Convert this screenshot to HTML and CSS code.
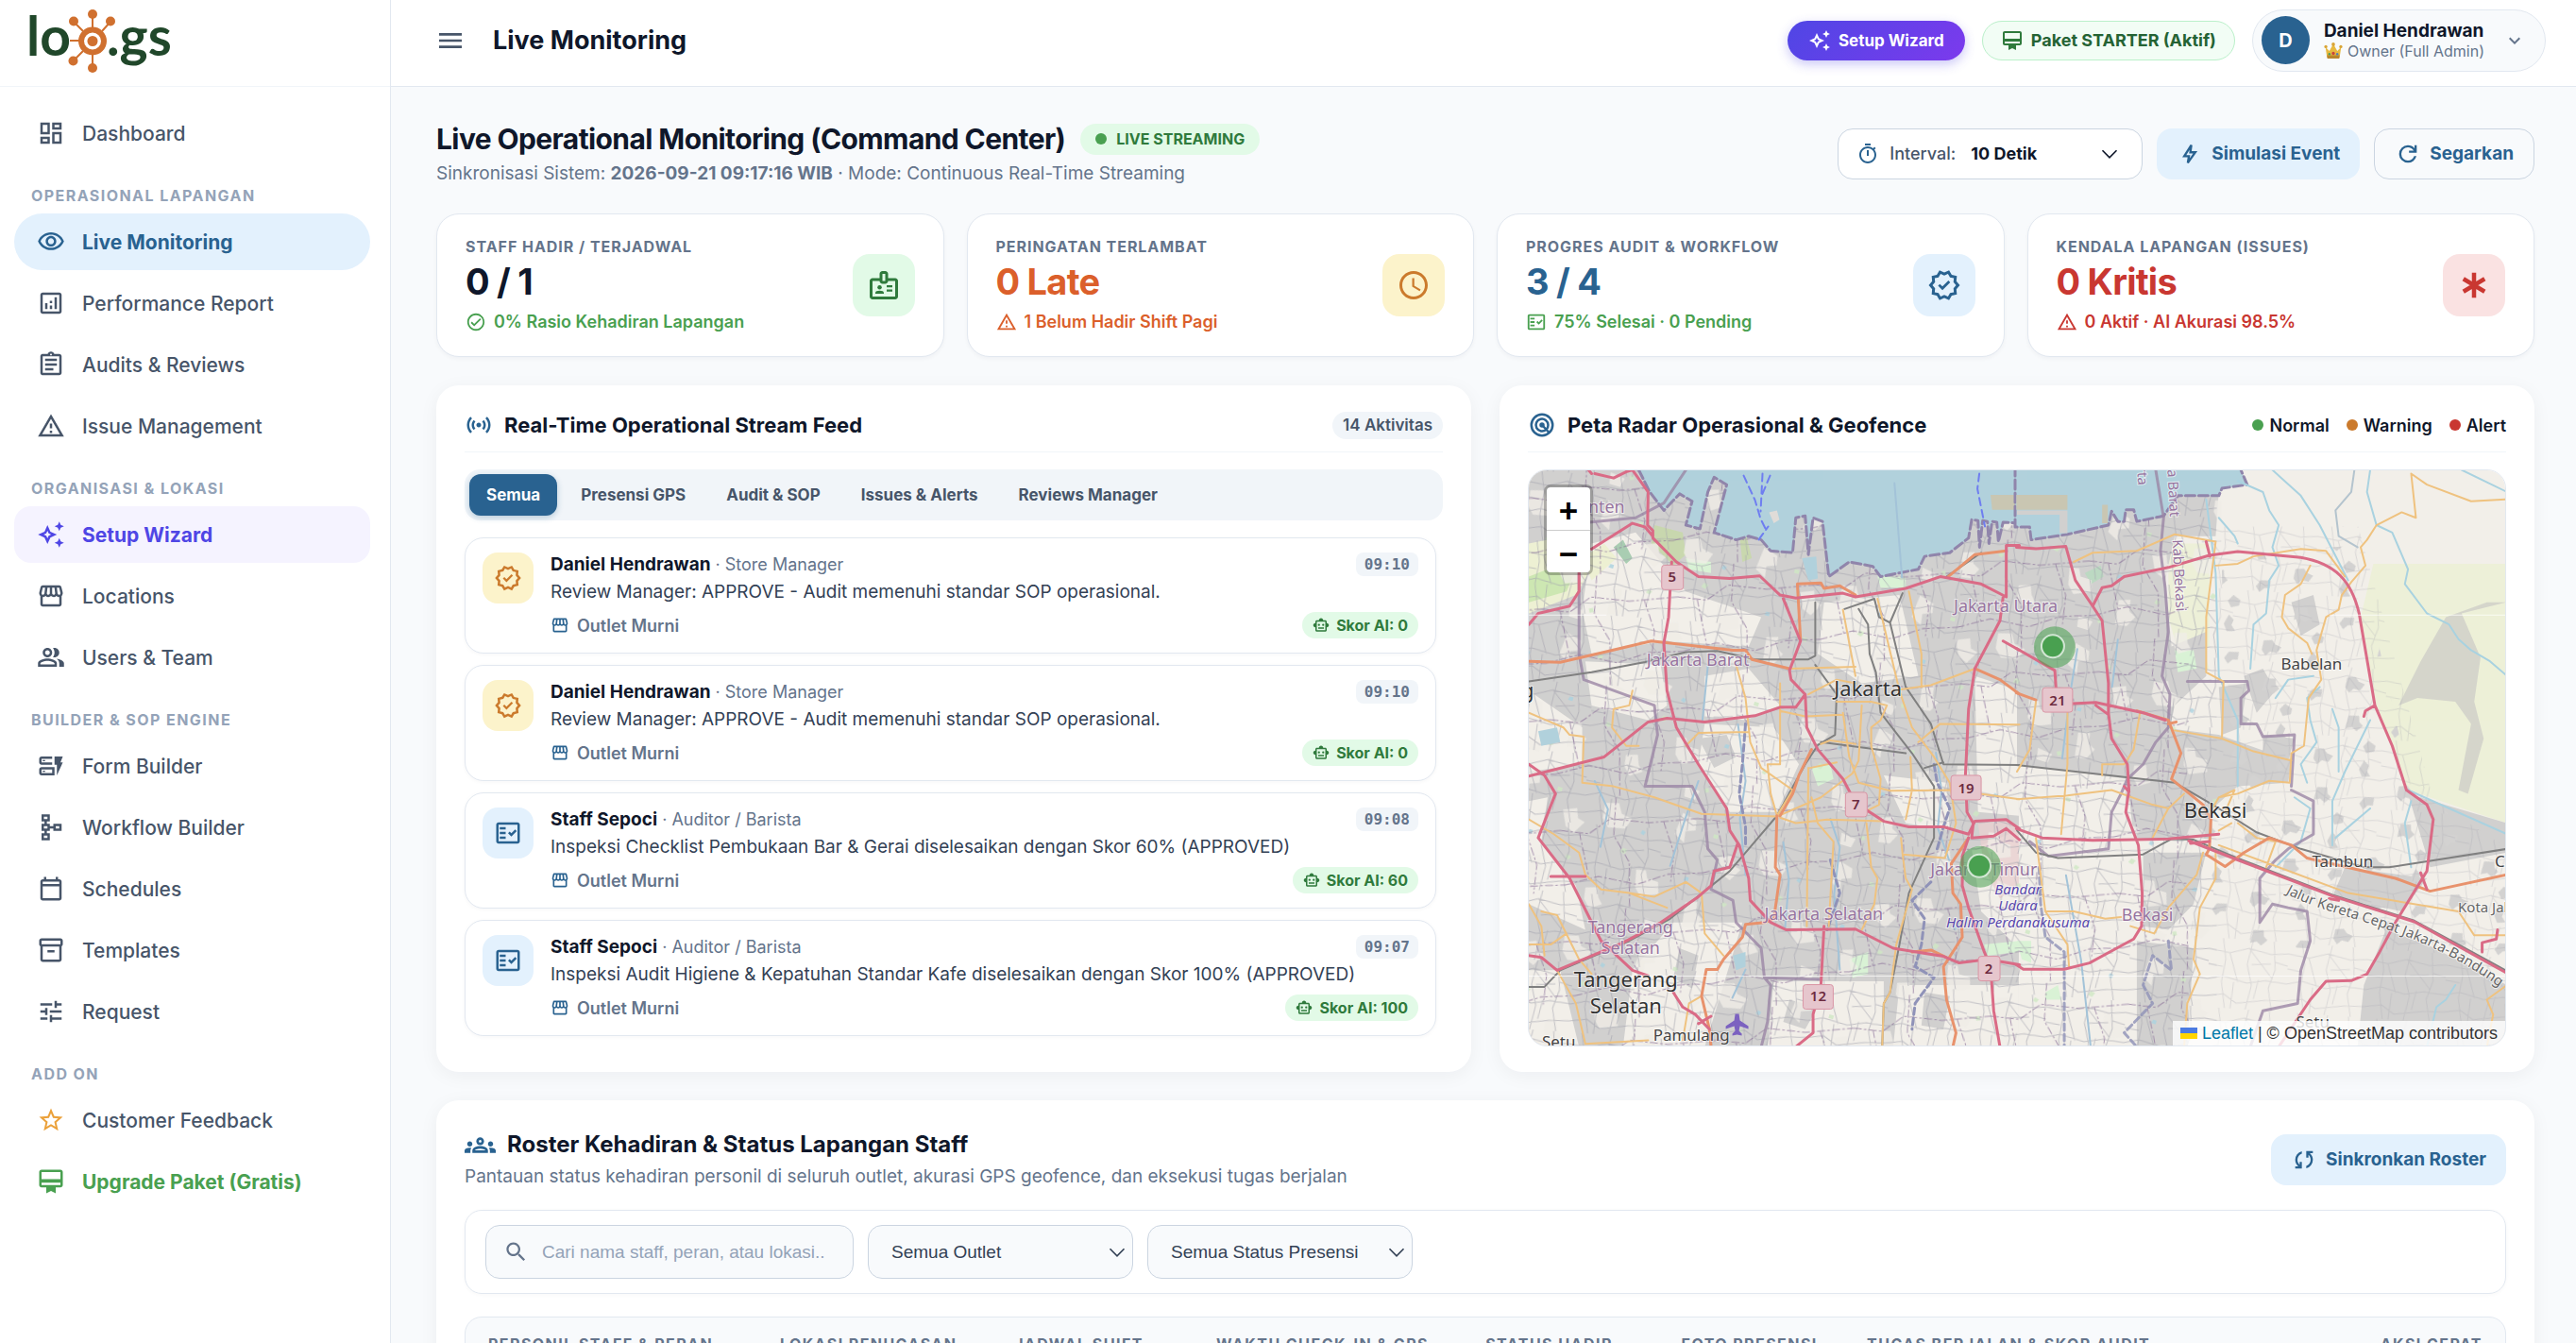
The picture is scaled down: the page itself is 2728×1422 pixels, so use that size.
FILE: index.html
```html
<!DOCTYPE html>
<html lang="id">
<head>
<meta charset="utf-8">
<meta name="viewport" content="width=device-width, initial-scale=1">
<title>Live Monitoring</title>
<link rel="stylesheet" href="styles.css">
</head>
<body>
<svg class="sprite" aria-hidden="true">
  <symbol id="i-menu" viewBox="0 0 24 24"><path d="M3 18h18v-2H3v2zm0-5h18v-2H3v2zm0-7v2h18V6H3z"/></symbol>
  <symbol id="i-dashboard" viewBox="0 0 24 24"><path d="M19 5v2h-4V5h4M9 5v6H5V5h4m10 8v6h-4v-6h4M9 17v2H5v-2h4M21 3h-8v6h8V3zM11 3H3v10h8V3zm10 8h-8v10h8V11zm-10 4H3v6h8v-6z"/></symbol>
  <symbol id="i-eye" viewBox="0 0 24 24"><path d="M12 6c3.79 0 7.17 2.13 8.82 5.5C19.17 14.87 15.79 17 12 17s-7.17-2.13-8.82-5.5C4.83 8.13 8.21 6 12 6m0-2C7 4 2.73 7.11 1 11.5 2.73 15.89 7 19 12 19s9.27-3.11 11-7.5C21.27 7.11 17 4 12 4zm0 5c1.38 0 2.5 1.12 2.5 2.5S13.38 14 12 14s-2.5-1.12-2.5-2.5S10.62 9 12 9m0-2c-2.48 0-4.5 2.02-4.5 4.5S9.52 16 12 16s4.5-2.02 4.5-4.5S14.48 7 12 7z"/></symbol>
  <symbol id="i-analytics" viewBox="0 0 24 24"><path d="M19 3H5c-1.1 0-2 .9-2 2v14c0 1.1.9 2 2 2h14c1.1 0 2-.9 2-2V5c0-1.1-.9-2-2-2zm0 16H5V5h14v14zM7 12h2v5H7zM15 7h2v10h-2zM11 14h2v3h-2zM11 10h2v2h-2z"/></symbol>
  <symbol id="i-assignment" viewBox="0 0 24 24"><path d="M7 15h7v2H7zm0-4h10v2H7zm0-4h10v2H7zm12-4h-4.18C14.4 1.84 13.3 1 12 1s-2.4.84-2.82 2H5c-.14 0-.27.01-.4.04-.39.08-.74.28-1.01.55-.18.18-.33.4-.43.64-.1.23-.16.49-.16.77v14c0 .27.06.54.16.78s.25.45.43.64c.27.27.62.47 1.01.55.13.02.26.03.4.03h14c1.1 0 2-.9 2-2V5c0-1.1-.9-2-2-2zm-7-.25c.41 0 .75.34.75.75s-.34.75-.75.75-.75-.34-.75-.75.34-.75.75-.75zM19 19H5V5h14v14z"/></symbol>
  <symbol id="i-warning" viewBox="0 0 24 24"><path d="M12 5.99L19.53 19H4.47L12 5.99M12 2L1 21h22L12 2zm1 14h-2v2h2v-2zm0-6h-2v4h2v-4z"/></symbol>
  <symbol id="i-sparkle" viewBox="0 0 24 24"><path d="M19 9l1.25-2.75L23 5l-2.75-1.25L19 1l-1.25 2.75L15 5l2.75 1.25L19 9zm0 6l-1.25 2.75L15 19l2.75 1.25L19 23l1.25-2.75L23 19l-2.75-1.25L19 15zm-7.5-5.5L9 4 6.5 9.5 1 12l5.5 2.5L9 20l2.5-5.5L17 12l-5.5-2.5zm-1.51 3.49L9 15.17l-.99-2.18L5.83 12l2.18-.99L9 8.83l.99 2.18 2.18.99-2.18.99z"/></symbol>
  <symbol id="i-store" viewBox="0 0 24 24"><path d="M21.9 8.89l-1.05-4.37c-.22-.9-1-1.52-1.91-1.52H5.05c-.9 0-1.69.63-1.9 1.52L2.1 8.89c-.24 1.02-.02 2.06.62 2.88.08.11.19.19.28.29V19c0 1.1.9 2 2 2h14c1.1 0 2-.9 2-2v-6.94c.09-.09.2-.18.28-.28.64-.82.87-1.87.62-2.89zm-2.99-3.9l1.05 4.37c.1.42.01.84-.25 1.17-.14.18-.44.47-.94.47-.61 0-1.14-.49-1.21-1.14L16.98 5l1.93-.01zM13 5h1.96l.54 4.52c.05.39-.07.78-.33 1.07-.22.26-.54.41-.95.41-.67 0-1.22-.59-1.22-1.31V5zM8.49 9.52L9.04 5H11v4.69c0 .72-.55 1.31-1.29 1.31-.34 0-.65-.15-.89-.41-.25-.29-.37-.68-.33-1.07zm-4.45-.16L5.05 5h1.97l-.58 4.86c-.08.65-.6 1.14-1.21 1.14-.49 0-.8-.29-.93-.47-.27-.32-.36-.75-.26-1.17zM5 19v-6.03c.08.01.15.03.23.03.87 0 1.66-.36 2.24-.95.6.6 1.4.95 2.31.95.87 0 1.65-.36 2.23-.93.59.57 1.39.93 2.29.93.84 0 1.64-.35 2.24-.95.58.59 1.37.95 2.24.95.08 0 .15-.02.23-.03V19H5z"/></symbol>
  <symbol id="i-people" viewBox="0 0 24 24"><path d="M16.67 13.13C18.04 14.06 19 15.32 19 17v3h4v-3c0-2.18-3.57-3.47-6.33-3.87zM15 12c2.21 0 4-1.79 4-4s-1.79-4-4-4c-.47 0-.91.1-1.33.24C14.5 5.27 15 6.58 15 8s-.5 2.73-1.33 3.76c.42.14.86.24 1.33.24zM9 12c2.21 0 4-1.79 4-4s-1.79-4-4-4-4 1.79-4 4 1.79 4 4 4zm0-6c1.1 0 2 .9 2 2s-.9 2-2 2-2-.9-2-2 .9-2 2-2zM9 13c-2.67 0-8 1.34-8 4v3h16v-3c0-2.66-5.33-4-8-4zm6 5H3v-.99C3.2 16.29 6.3 15 9 15s5.8 1.29 6 2v1z"/></symbol>
  <symbol id="i-form" viewBox="0 0 24 24"><path d="M17 20v-9h-2V4h7l-2 5h2zM13 6v3H4V6h9m0-2H4c-1.1 0-2 .9-2 2v3c0 1.1.9 2 2 2h9zM13 15v3H4v-3h9m2-2H4c-1.1 0-2 .9-2 2v3c0 1.1.9 2 2 2h11zM5 7h2v1H5zM5 16h2v1H5z"/></symbol>
  <symbol id="i-schema" viewBox="0 0 24 24"><path d="M14 9v2h-3V9H8.5V7H11V1H4v6h2.5v2H4v6h2.5v2H4v6h7v-6H8.5v-2H11v-2h3v2h7V9h-7zM6 3h3v2H6V3zm3 18H6v-2h3v2zm0-8H6v-2h3v2zm10 0h-3v-2h3v2z"/></symbol>
  <symbol id="i-calendar" viewBox="0 0 24 24"><path d="M19 4h-1V2h-2v2H8V2H6v2H5c-1.11 0-1.99.9-1.99 2L3 20c0 1.1.89 2 2 2h14c1.1 0 2-.9 2-2V6c0-1.1-.9-2-2-2zm0 16H5V10h14v10zm0-12H5V6h14v2z"/></symbol>
  <symbol id="i-archive" viewBox="0 0 24 24"><path d="M20 2H4c-1 0-2 .9-2 2v3.010c0 .72.43 1.340 1 1.690V20c0 1.100 1.100 2 2 2h14c.9 0 2-.9 2-2V8.700c.57-.35 1-.97 1-1.690V4c0-1.100-1-2-2-2zm-1 18H5V9h14v11zm1-13H4V4h16v3zM9 12h6v2H9z"/></symbol>
  <symbol id="i-tune" viewBox="0 0 24 24"><path d="M3 17v2h6v-2H3zM3 5v2h10V5H3zm10 16v-2h8v-2h-8v-2h-2v6h2zM7 9v2H3v2h4v2h2V9H7zm14 4v-2H11v2h10zm-6-4h2V7h4V5h-4V3h-2v6z"/></symbol>
  <symbol id="i-star" viewBox="0 0 24 24"><path d="M22 9.24l-7.19-.62L12 2 9.19 8.63 2 9.24l5.46 4.73L5.82 21 12 17.27 18.18 21l-1.63-7.03L22 9.24zM12 15.4l-3.76 2.27 1-4.28-3.32-2.88 4.38-.38L12 6.1l1.71 4.04 4.38.38-3.32 2.88 1 4.28L12 15.4z"/></symbol>
  <symbol id="i-plan" viewBox="0 0 24 24"><path d="M20 2H4c-1.11 0-2 .89-2 2v11c0 1.11.89 2 2 2h4v5l4-2 4 2v-5h4c1.11 0 2-.89 2-2V4c0-1.11-.89-2-2-2zm0 13H4v-2h16v2zm0-5H4V4h16v6z"/></symbol>
  <symbol id="i-timer" viewBox="0 0 24 24"><path d="M15 1H9v2h6V1zm-4 13h2V8h-2v6zm8.03-6.61l1.42-1.42c-.43-.51-.9-.99-1.41-1.41l-1.42 1.42C16.07 4.74 14.12 4 12 4c-4.97 0-9 4.03-9 9s4.02 9 9 9 9-4.03 9-9c0-2.12-.74-4.07-1.97-5.61zM12 20c-3.87 0-7-3.13-7-7s3.13-7 7-7 7 3.13 7 7-3.13 7-7 7z"/></symbol>
  <symbol id="i-bolt" viewBox="0 0 24 24"><path d="M13.400 4 7 14h4.200l-1 6L17 10.500h-4.500z" fill="none" stroke="currentColor" stroke-width="2"/></symbol>
  <symbol id="i-refresh" viewBox="0 0 24 24"><path d="M12 20q-3.350 0-5.675-2.325T4 12t2.325-5.675T12 4q1.725 0 3.300.713T18 6.750V4h2v7h-7V9h4.200q-.8-1.400-2.188-2.200T12 6Q9.500 6 7.750 7.750T6 12t1.750 4.250T12 18q1.925 0 3.475-1.100T17.650 14h2.100q-.7 2.650-2.850 4.325T12 20"/></symbol>
  <symbol id="i-check" viewBox="0 0 24 24"><path d="M12 2C6.480 2 2 6.480 2 12s4.480 10 10 10 10-4.480 10-10S17.520 2 12 2zm0 18c-4.410 0-8-3.590-8-8s3.590-8 8-8 8 3.590 8 8-3.590 8-8 8zm4.590-12.420L10 14.170l-2.590-2.580L6 13l4 4 8-8z"/></symbol>
  <symbol id="i-badge" viewBox="0 0 24 24"><path fill-rule="evenodd" d="M20 7h-5V4c0-1.100-.9-2-2-2h-2c-1.100 0-2 .9-2 2v3H4c-1.100 0-2 .9-2 2v11c0 1.100.9 2 2 2h16c1.100 0 2-.9 2-2V9c0-1.100-.9-2-2-2zM11 4h2v5h-2V4zm9 16H4V9h5c0 1.100.9 2 2 2h2c1.100 0 2-.9 2-2h5v11z"/><circle cx="9" cy="13.500" r="1.500"/><path d="M11.080 16.180C10.440 15.900 9.740 15.750 9 15.750s-1.440.15-2.080.43C6.360 16.420 6 16.960 6 17.570V18h6v-.43c0-.61-.36-1.150-.92-1.390zM14 15h4v1.500h-4zM14 12h4v1.500h-4z"/></symbol>
  <symbol id="i-clock" viewBox="0 0 24 24"><path d="M11.990 2C6.470 2 2 6.480 2 12s4.470 10 9.990 10C17.520 22 22 17.520 22 12S17.520 2 11.990 2zM12 20c-4.420 0-8-3.580-8-8s3.580-8 8-8 8 3.580 8 8-3.580 8-8 8zm.5-13H11v6l5.250 3.150.75-1.230-4.500-2.670z"/></symbol>
  <symbol id="i-verified" viewBox="0 0 24 24"><path d="M23 12l-2.440-2.790.34-3.690-3.610-.82-1.890-3.200L12 2.960 8.600 1.500 6.710 4.690 3.100 5.500l.34 3.700L1 12l2.440 2.790-.34 3.700 3.610.82 1.890 3.200 3.400-1.470 3.400 1.460 1.890-3.190 3.610-.82-.34-3.690L23 12zm-3.950 1.480l-.56.65.08.85.18 1.950-1.900.43-.84.19-.44.74-.99 1.680-1.780-.77-.8-.34-.79.34-1.780.77-.99-1.670-.44-.74-.84-.19-1.900-.43.18-1.960.08-.85-.56-.65L3.670 12l1.290-1.480.56-.65-.09-.86-.18-1.940 1.900-.43.84-.19.44-.74.99-1.680 1.780.77.8.34.79-.34 1.780-.77.99 1.680.44.74.84.19 1.900.43-.18 1.950-.08.85.56.65 1.290 1.470-1.280 1.480z"/><path d="M10.700 15.500 7.600 12.400l1.300-1.300 1.800 1.800 4.200-4.200 1.300 1.300z"/></symbol>
  <symbol id="i-fact" viewBox="0 0 24 24"><path fill-rule="evenodd" d="M20 3H4c-1.100 0-2 .9-2 2v14c0 1.100.9 2 2 2h16c1.100 0 2-.9 2-2V5c0-1.100-.9-2-2-2zm0 16H4V5h16v14z"/><path d="M19.410 10.420L17.990 9l-3.170 3.170-1.410-1.420L12 12.160 14.820 15zM5 7h5v2H5zM5 11h5v2H5zM5 15h5v2H5z"/></symbol>
  <symbol id="i-emergency" viewBox="0 0 24 24"><path d="M12 3.200v17.600M4.500 7.500l15 9M4.500 16.500l15-9" fill="none" stroke="currentColor" stroke-width="3"/></symbol>
  <symbol id="i-sensors" viewBox="0 0 24 24"><path d="M7.760 16.240C6.670 15.160 6 13.660 6 12s.67-3.160 1.760-4.240l1.420 1.420C8.450 9.900 8 10.900 8 12s.45 2.100 1.170 2.830l-1.410 1.410zm8.480 0C17.330 15.160 18 13.660 18 12s-.67-3.160-1.760-4.240l-1.420 1.420C15.550 9.900 16 10.900 16 12s-.45 2.100-1.170 2.830l1.410 1.410zM12 10c-1.100 0-2 .9-2 2s.9 2 2 2 2-.9 2-2-.9-2-2-2zm8 2c0 2.210-.9 4.210-2.350 5.650l1.420 1.420C20.880 17.260 22 14.760 22 12s-1.120-5.260-2.930-7.070l-1.420 1.420C19.100 7.790 20 9.790 20 12zM6.350 6.350L4.930 4.930C3.120 6.740 2 9.240 2 12s1.120 5.260 2.930 7.070l1.420-1.420C4.900 16.210 4 14.210 4 12s.9-4.210 2.350-5.650z"/></symbol>
  <symbol id="i-radar" viewBox="0 0 24 24"><g fill="none" stroke="currentColor" stroke-width="2"><circle cx="12" cy="12" r="9"/><path d="M15.500 15.900A5.200 5.200 0 1 1 17.200 12c0 1.500-.5 2.600-1.200 3.400M12 12l6.200 6.600"/></g><circle cx="12" cy="12" r="2.200"/></symbol>
  <symbol id="i-robot" viewBox="0 0 24 24"><path fill-rule="evenodd" d="M20 9V7c0-1.100-.9-2-2-2h-3c0-1.660-1.340-3-3-3S9 3.340 9 5H6c-1.100 0-2 .9-2 2v2c-1.660 0-3 1.340-3 3s1.340 3 3 3v4c0 1.100.9 2 2 2h12c1.100 0 2-.9 2-2v-4c1.660 0 3-1.340 3-3s-1.340-3-3-3zm-2 10H6V7h12v12z"/><circle cx="9" cy="11.500" r="1.500"/><circle cx="15" cy="11.500" r="1.500"/><path d="M8 15h8v2H8z"/></symbol>
  <symbol id="i-groups" viewBox="0 0 24 24"><path fill-rule="evenodd" d="M12 12.750c1.630 0 3.070.39 4.240.9 1.080.48 1.760 1.560 1.760 2.730V18H6v-1.610c0-1.180.68-2.260 1.760-2.730 1.170-.52 2.610-.91 4.240-.91zM8.070 16c.09-.23.13-.39.91-.69.97-.38 1.990-.56 3.020-.56s2.050.18 3.020.56c.77.3.81.46.91.69H8.070zM4 13c1.100 0 2-.9 2-2s-.9-2-2-2-2 .9-2 2 .9 2 2 2zm1.130 1.100c-.37-.06-.74-.1-1.130-.1-.99 0-1.930.21-2.780.58C.48 14.900 0 15.620 0 16.430V18h4.500v-1.610c0-.83.23-1.610.63-2.290zM20 13c1.100 0 2-.9 2-2s-.9-2-2-2-2 .9-2 2 .9 2 2 2zm4 3.430c0-.81-.48-1.530-1.220-1.850-.85-.37-1.790-.58-2.780-.58-.39 0-.76.04-1.130.1.4.68.63 1.460.63 2.290V18H24v-1.570zM12 6c1.660 0 3 1.340 3 3s-1.340 3-3 3-3-1.340-3-3 1.340-3 3-3zM12 8c.55 0 1 .45 1 1s-.45 1-1 1-1-.45-1-1 .45-1 1-1z"/></symbol>
  <symbol id="i-sync" viewBox="0 0 24 24"><path d="M4 20v-2h2.750l-.4-.35q-1.225-1.225-1.787-2.662T4 12.050q0-2.775 1.663-4.937T10 4.250v2.100Q8.200 7 7.100 8.563T6 12.050q0 1.125.425 2.188T7.750 16.200l.25.25V14h2v6zm10-.25v-2.100q1.800-.65 2.900-2.212T18 11.950q0-1.125-.425-2.187T16.250 7.800L16 7.550V10h-2V4h6v2h-2.750l.4.35q1.225 1.225 1.788 2.663T20 11.950q0 2.775-1.662 4.938T14 19.750"/></symbol>
  <symbol id="i-search" viewBox="0 0 24 24"><path d="M15.500 14h-.79l-.28-.27C15.410 12.590 16 11.110 16 9.500 16 5.910 13.090 3 9.500 3S3 5.910 3 9.500 5.910 16 9.500 16c1.610 0 3.090-.59 4.230-1.570l.27.28v.79l5 4.990L20.490 19l-4.990-5zm-6 0C7.010 14 5 11.990 5 9.500S7.010 5 9.500 5 14 7.010 14 9.500 11.990 14 9.500 14z"/></symbol>
  <symbol id="i-down" viewBox="0 0 24 24"><path d="M16.590 8.590L12 13.170 7.410 8.590 6 10l6 6 6-6z"/></symbol>
  <symbol id="i-chevron" viewBox="0 0 24 24"><path d="M3 7.500l9 9 9-9" fill="none" stroke="currentColor" stroke-width="2"/></symbol>
  <symbol id="i-crown" viewBox="0 0 24 24"><path d="M2 7l5 5 5-9 5 9 5-5-2 13H4z" fill="#e8b93e"/><path d="M4 17.500h16l-.4 4H4.400z" fill="#b9852a"/><circle cx="2.500" cy="6.500" r="2" fill="#d9a436"/><circle cx="12" cy="3.500" r="2.200" fill="#d9a436"/><circle cx="21.500" cy="6.500" r="2" fill="#d9a436"/><circle cx="12" cy="15" r="2" fill="#c8453b"/><circle cx="7" cy="16" r="1.500" fill="#4f9a5b"/><circle cx="17" cy="16" r="1.500" fill="#4f7fb8"/></symbol>
</svg>

<div class="app">
  <aside class="sidebar">
    <a class="brand" href="#" aria-label="loogs">
      <svg width="220" height="91" viewBox="0 0 220 91">
        <g class="logo-text"><text x="28" y="59">lo</text><text x="113" y="59">.gs</text></g>
        <g stroke="#d0702f" stroke-width="2" fill="none"><path d="M98 15v14M98 58v14M74 43h12M78 23l10 10M117 23L108 33M78 64l10-10"/></g>
        <g fill="#d0702f"><circle cx="98" cy="15" r="5"/><circle cx="98" cy="72" r="5"/><circle cx="78" cy="22.500" r="5"/><circle cx="117" cy="22.500" r="5"/><circle cx="77.500" cy="64.500" r="5"/><circle cx="98" cy="43.500" r="5.500"/></g>
        <circle cx="98" cy="43.500" r="12" fill="none" stroke="#d0702f" stroke-width="6"/>
      </svg>
    </a>
    <nav class="nav" aria-label="Menu utama">
      <a class="nav-item" href="#"><svg class="ic"><use href="#i-dashboard"/></svg>Dashboard</a>
      <h2 class="nav-label">OPERASIONAL LAPANGAN</h2>
      <a class="nav-item is-active" href="#"><svg class="ic"><use href="#i-eye"/></svg>Live Monitoring</a>
      <a class="nav-item" href="#"><svg class="ic"><use href="#i-analytics"/></svg>Performance Report</a>
      <a class="nav-item" href="#"><svg class="ic"><use href="#i-assignment"/></svg>Audits &amp; Reviews</a>
      <a class="nav-item" href="#"><svg class="ic"><use href="#i-warning"/></svg>Issue Management</a>
      <h2 class="nav-label">ORGANISASI &amp; LOKASI</h2>
      <a class="nav-item is-wizard" href="#"><svg class="ic"><use href="#i-sparkle"/></svg>Setup Wizard</a>
      <a class="nav-item" href="#"><svg class="ic"><use href="#i-store"/></svg>Locations</a>
      <a class="nav-item" href="#"><svg class="ic"><use href="#i-people"/></svg>Users &amp; Team</a>
      <h2 class="nav-label">BUILDER &amp; SOP ENGINE</h2>
      <a class="nav-item" href="#"><svg class="ic"><use href="#i-form"/></svg>Form Builder</a>
      <a class="nav-item" href="#"><svg class="ic"><use href="#i-schema"/></svg>Workflow Builder</a>
      <a class="nav-item" href="#"><svg class="ic"><use href="#i-calendar"/></svg>Schedules</a>
      <a class="nav-item" href="#"><svg class="ic"><use href="#i-archive"/></svg>Templates</a>
      <a class="nav-item" href="#"><svg class="ic"><use href="#i-tune"/></svg>Request</a>
      <h2 class="nav-label">ADD ON</h2>
      <a class="nav-item" href="#"><svg class="ic ic-star"><use href="#i-star"/></svg>Customer Feedback</a>
      <a class="nav-item is-upgrade" href="#"><svg class="ic"><use href="#i-plan"/></svg>Upgrade Paket (Gratis)</a>
    </nav>
  </aside>

  <div class="main">
    <header class="topbar">
      <button class="menu-btn" type="button" aria-label="Menu"><svg class="ic"><use href="#i-menu"/></svg></button>
      <p class="topbar-title">Live Monitoring</p>
      <div class="topbar-actions">
        <button class="wizard-btn" type="button"><svg class="ic"><use href="#i-sparkle"/></svg>Setup Wizard</button>
        <a class="plan-chip" href="#"><svg class="ic"><use href="#i-plan"/></svg>Paket STARTER (Aktif)</a>
        <button class="profile" type="button">
          <span class="avatar">D</span>
          <span class="profile-text"><span class="profile-name">Daniel Hendrawan</span><span class="profile-role"><svg class="ic"><use href="#i-crown"/></svg>Owner (Full Admin)</span></span>
          <svg class="ic profile-arrow"><use href="#i-down"/></svg>
        </button>
      </div>
    </header>

    <main class="content">
      <section class="page-head">
        <div>
          <div class="title-row">
            <h1>Live Operational Monitoring (Command Center)</h1>
            <span class="live-badge"><span class="dot green"></span>LIVE STREAMING</span>
          </div>
          <p class="subtitle">Sinkronisasi Sistem: <strong>2026-09-21 09:17:16 WIB</strong> · Mode: Continuous Real-Time Streaming</p>
        </div>
        <div class="head-actions">
          <div class="interval">
            <svg class="ic"><use href="#i-timer"/></svg>
            <label for="interval">Interval:</label>
            <span class="select-wrap"><select id="interval"><option>10 Detik</option></select><svg class="ic"><use href="#i-chevron"/></svg></span>
          </div>
          <button class="btn btn-soft" type="button"><svg class="ic"><use href="#i-bolt"/></svg>Simulasi Event</button>
          <button class="btn btn-line" type="button"><svg class="ic"><use href="#i-refresh"/></svg>Segarkan</button>
        </div>
      </section>

      <section class="kpis">
        <article class="kpi">
          <div><h3>STAFF HADIR / TERJADWAL</h3><p class="kpi-value">0 / 1</p><p class="kpi-note green"><svg class="ic"><use href="#i-check"/></svg>0% Rasio Kehadiran Lapangan</p></div>
          <span class="kpi-icon bg-green"><svg class="ic"><use href="#i-badge"/></svg></span>
        </article>
        <article class="kpi">
          <div><h3>PERINGATAN TERLAMBAT</h3><p class="kpi-value orange">0 Late</p><p class="kpi-note orange"><svg class="ic"><use href="#i-warning"/></svg>1 Belum Hadir Shift Pagi</p></div>
          <span class="kpi-icon bg-amber"><svg class="ic"><use href="#i-clock"/></svg></span>
        </article>
        <article class="kpi">
          <div><h3>PROGRES AUDIT &amp; WORKFLOW</h3><p class="kpi-value blue">3 / 4</p><p class="kpi-note green"><svg class="ic"><use href="#i-fact"/></svg>75% Selesai · 0 Pending</p></div>
          <span class="kpi-icon bg-blue"><svg class="ic"><use href="#i-verified"/></svg></span>
        </article>
        <article class="kpi">
          <div><h3>KENDALA LAPANGAN (ISSUES)</h3><p class="kpi-value red">0 Kritis</p><p class="kpi-note red"><svg class="ic"><use href="#i-warning"/></svg>0 Aktif · AI Akurasi 98.5%</p></div>
          <span class="kpi-icon bg-red"><svg class="ic"><use href="#i-emergency"/></svg></span>
        </article>
      </section>

      <div class="panels">
        <section class="panel">
          <header class="panel-head">
            <h2><svg class="ic"><use href="#i-sensors"/></svg>Real-Time Operational Stream Feed</h2>
            <span class="count-chip">14 Aktivitas</span>
          </header>
          <div class="tabs">
            <button type="button" class="tab is-active">Semua</button>
            <button type="button" class="tab">Presensi GPS</button>
            <button type="button" class="tab">Audit &amp; SOP</button>
            <button type="button" class="tab">Issues &amp; Alerts</button>
            <button type="button" class="tab">Reviews Manager</button>
          </div>
          <div class="feed">
            <article class="feed-card">
              <span class="feed-icon bg-amber"><svg class="ic"><use href="#i-verified"/></svg></span>
              <div class="feed-body">
                <div class="feed-row"><p class="who"><strong>Daniel Hendrawan</strong> · Store Manager</p><time>09:10</time></div>
                <p class="feed-text">Review Manager: APPROVE - Audit memenuhi standar SOP operasional.</p>
                <div class="feed-row"><span class="outlet"><svg class="ic"><use href="#i-store"/></svg>Outlet Murni</span><span class="score"><svg class="ic"><use href="#i-robot"/></svg>Skor AI: 0</span></div>
              </div>
            </article>
            <article class="feed-card">
              <span class="feed-icon bg-amber"><svg class="ic"><use href="#i-verified"/></svg></span>
              <div class="feed-body">
                <div class="feed-row"><p class="who"><strong>Daniel Hendrawan</strong> · Store Manager</p><time>09:10</time></div>
                <p class="feed-text">Review Manager: APPROVE - Audit memenuhi standar SOP operasional.</p>
                <div class="feed-row"><span class="outlet"><svg class="ic"><use href="#i-store"/></svg>Outlet Murni</span><span class="score"><svg class="ic"><use href="#i-robot"/></svg>Skor AI: 0</span></div>
              </div>
            </article>
            <article class="feed-card">
              <span class="feed-icon bg-blue"><svg class="ic"><use href="#i-fact"/></svg></span>
              <div class="feed-body">
                <div class="feed-row"><p class="who"><strong>Staff Sepoci</strong> · Auditor / Barista</p><time>09:08</time></div>
                <p class="feed-text">Inspeksi Checklist Pembukaan Bar &amp; Gerai diselesaikan dengan Skor 60% (APPROVED)</p>
                <div class="feed-row"><span class="outlet"><svg class="ic"><use href="#i-store"/></svg>Outlet Murni</span><span class="score"><svg class="ic"><use href="#i-robot"/></svg>Skor AI: 60</span></div>
              </div>
            </article>
            <article class="feed-card">
              <span class="feed-icon bg-blue"><svg class="ic"><use href="#i-fact"/></svg></span>
              <div class="feed-body">
                <div class="feed-row"><p class="who"><strong>Staff Sepoci</strong> · Auditor / Barista</p><time>09:07</time></div>
                <p class="feed-text">Inspeksi Audit Higiene &amp; Kepatuhan Standar Kafe diselesaikan dengan Skor 100% (APPROVED)</p>
                <div class="feed-row"><span class="outlet"><svg class="ic"><use href="#i-store"/></svg>Outlet Murni</span><span class="score"><svg class="ic"><use href="#i-robot"/></svg>Skor AI: 100</span></div>
              </div>
            </article>
          </div>
        </section>

        <section class="panel">
          <header class="panel-head">
            <h2><svg class="ic"><use href="#i-radar"/></svg>Peta Radar Operasional &amp; Geofence</h2>
            <ul class="legend">
              <li><span class="dot green"></span>Normal</li>
              <li><span class="dot amber"></span>Warning</li>
              <li><span class="dot red"></span>Alert</li>
            </ul>
          </header>
          <div class="map">
            <svg class="map-art" viewBox="0 0 1036 611" preserveAspectRatio="xMidYMid slice">
              <defs>
                <pattern id="streets" width="84" height="74" patternUnits="userSpaceOnUse" patternTransform="rotate(4)">
                  <path class="st" d="M0 12l22 3 20-6 24 5 18-2M0 44l16-4 26 6 20-4 22 2M14 0l4 22-3 24 5 28M46 0l-5 26 6 22-5 26M68 0l3 30-6 20 5 24M22 15l10 30M42 9l26 30M0 62l18-3 14 9 30-5 22-1M28 46l-2 28M54 42l-4 20M0 28l15 2M71 22l13 3M46 26l20-2"/>
                </pattern>
                <pattern id="dashes" width="146" height="118" patternUnits="userSpaceOnUse" patternTransform="rotate(-5)">
                  <path class="ds" d="M0 30l30 6 24-14 40 8 52 0M62 0l-6 40 14 30-4 48M0 88l36-6 40 12 34-8 36 2M110 30l8 34-6 30M20 34l6 50"/>
                </pattern>
                <pattern id="patches" width="173" height="147" patternUnits="userSpaceOnUse" patternTransform="rotate(17)">
                  <path fill="#f0ede7" d="M8 20l14-4 6 10 12 2-4 12-18 4-8-8zM90 6l16 4 2 10-10 4 2 12-12-6zM140 40l14-6 4 10 8 2-8 14-10-4zM60 78l10-2 4 8 12 0 4 12-18 8-8-8zM120 96l12-4 2 12 8 4-6 12-12 2zM14 112l12-4 4 10 6 6-12 8-8-8zM84 124l16 2-2 10-12 0z"/>
                  <path fill="#cfe8c4" d="M40 60l5 1-2 5-5-1zM128 18h5v4h-5zM104 122l4-2 2 4-4 2zM158 84l5 1-2 4-4-1z"/>
                  <path fill="#a9d2e0" d="M54 36l4 1-1 4-4-1zM112 70l4 0 0 4-5 0z"/>
                </pattern>
                <pattern id="blobs" width="97" height="83" patternUnits="userSpaceOnUse" patternTransform="rotate(24)">
                  <path fill="#d3d2d1" d="M10 14l8-4 5 3 7 0-2 8-7 1-3 6-6-4zM62 4l7 3 0 6 6 4-8 4-6-6zM78 40l10-4 2 8-5 2-3 6-6-4zM28 50l10-4 3 6 5 2-4 8-6-2-6 4zM58 66l9 2 1 6-7 5-6-5z"/>
                </pattern>
              </defs>
              <rect width="1036" height="611" fill="#f2efe9"/>
              <!-- west half of the city -->
              <g transform="scale(.3333 .3903)">
                <path fill="#d1d0cf" d="M0 0H1560V1568H0z"/>
                <path fill="#f2efe9" d="M200 200L340 170L500 330L740 400L700 480L430 465L200 500L170 380zM180 520L420 530L440 640L380 680L200 640zM560 560L700 540L800 640L690 680L560 670zM0 600L170 700L170 800L0 820zM560 690L780 700L860 800L790 930L640 930L540 800zM940 360L1180 340L1240 560L1060 580L920 500zM1420 560L1560 600V940L1430 930zM1130 830L1330 850L1340 980L1200 960zM0 900L60 890L40 1010L150 1130L180 1250L0 1180zM460 1230L680 1230L560 1568H300L330 1360zM0 1360L100 1360L160 1568H0zM780 1390L1130 1390L1130 1568H760zM1180 1400H1560V1568H1160zM1410 1030L1560 980V1300L1440 1200z"/>
                <path fill="#d1d0cf" d="M480 1300l60 20-20 90-60-30zM830 1440l90 20-40 60-70-20zM1260 1420l80 10-20 90-70-10zM540 730l90-10 30 60-70 30z"/>
                <path fill="#edf0d3" d="M0 200l60-10 0 70 130 20-40 60-150 50zM170 240l70-40 40 40-80 60z"/>
                <path fill="#bfe3a4" opacity=".7" d="M0 290l60-20 80 20-20 40-120 30z"/>
                <path fill="#c9d8ae" d="M400 150l90 20 10 60-40 30-70-60zM670 170l20 0 20 70-30 10z"/>
                <path fill="#a9cdb2" d="M270 210l30-20 30 50-20 15z"/>
                <path fill="#d9f2d5" d="M900 810l60-10 10 40-50 20zM1020 1330l60-20 0 60-50 10zM1110 290l90 0 0 30-80 0zM500 240l80 10 0 30-70-10zM1450 1290l110-10 0 30-100 10z"/>
                <path fill="#e9cfd0" opacity=".8" d="M1430 960l100-5 30 20v150l-60 40-50-80z"/>
              </g>
              <!-- east half -->
              <g transform="translate(518 0) scale(.3346 .3903)">
                <path fill="#edf0d8" d="M1130 255H1554V960L1240 870L1140 640L1090 400zM480 200l130 0 0 280-90 40-40-120zM500 470l80-10 30 80-100 10z"/>
                <path fill="#d1d0cf" d="M0 100L480 70L640 60L630 180L500 180L470 300L490 480L600 440L600 560L500 640L460 800L350 840L0 800zM350 840L460 700L640 720L870 790L860 850L700 860L620 920L610 1000L520 1010L370 1000zM400 1040L600 1040L560 1180L480 1250L400 1240zM380 1280L560 1300L540 1568L380 1568zM640 590L730 580L710 700L650 720zM1170 1250L1300 1290L1554 1400V1568H1180L1080 1568L1100 1400zM1240 880L1554 960V1040L1310 1080zM1040 1080L1300 1110L1220 1200L1000 1160zM870 360l70-20 20 80-60 30zM720 560l60-20 40 60-60 60zM780 720l100 10-20 60-80-10z"/>
                <path fill="#c4c3c3" opacity=".6" d="M1360 400l130-40 60 0-140 30 60 120-20 120 30 100-50 150-30-10 40-180-50-60-120-10-60 20 70-120z"/>
                <path fill="#bcd9c2" d="M215 280l50-20 10 30-40 20z"/>
                <path fill="#d9f2d5" d="M500 490l60 0 10 50-60 10zM0 1280l45 0 0 60-30-10zM90 1420l40-20 10 40-50 0z"/>
              </g>
              <path fill="url(#blobs)" d="M735 90L880 80L896 160L930 310L960 350L1036 420V520L700 500L740 300z"/>
              <path fill="url(#patches)" opacity=".8" d="M0 0H735V611H0z"/>
              <path fill="url(#streets)" d="M0 0H730V611H0z"/>
              <path fill="url(#streets)" opacity=".5" d="M730 60H880L960 350L1036 400V611H730z"/>
              <path fill="url(#dashes)" d="M0 0H700V611H0z"/>
              <g transform="scale(.3333 .3903)">
                <path class="sea" d="M350 0L385 60L430 110L480 65L520 85L500 150L545 160L570 60L590 20L630 40L590 170L660 190L700 180L740 190L770 220L840 225L850 130L880 125L890 230L905 130L935 140L955 290L1020 250L1095 262L1120 290L1240 270L1260 235L1340 225L1400 185L1410 135L1430 138L1435 210L1445 138L1460 140L1465 200L1475 140L1490 142L1495 195L1510 142L1562 145V-20H350z"/>
                <path fill="#e0dcd8" d="M765 115l25-5 8 25-18 10z"/>
                <path fill="#c9c6b2" d="M1470 68H1562V108H1475z"/>
                <path fill="#b1d1dc" d="M870 240l45-5 5 60-30 5zM30 710l60-10 10 40-60 10zM650 1320l40-10 0 40-30 10z"/>
              </g>
              <g transform="translate(518 0) scale(.3346 .3903)">
                <path class="sea" d="M-6 -20H700L730 40L650 50L640 70L510 70L465 125L380 140L370 108L345 108L340 140L320 140L300 112L290 150L160 175L45 190L40 155L-6 155z"/>
                <path fill="#d1d0cf" d="M0 110H160V172L135 172V122H0z"/>
                <path fill="#c9c6b2" d="M-2 68H160V108H-2zM270 95h18v50h-18z"/>
              </g>
              <!-- rivers -->
              <g class="river" transform="translate(518 0) scale(.3346 .3903)">
                <path d="M810 0L900 70L960 150L1050 300M1120 0L1110 60L1140 150L1190 170L1240 270L1230 310L1300 390L1370 420L1400 460L1440 490L1500 520L1554 560M700 30L780 60L800 110L830 150L810 210L830 260L800 300L790 390L750 420L740 540M640 130L690 180L700 200M1410 0L1554 60M600 80L630 280L640 560L700 680L700 860M960 590L920 620L930 680L950 740L900 800L920 850M1120 680L1080 750L1040 820L1000 900L1000 1020M820 620L860 570L940 560M1240 870L1554 990M880 890L930 920L900 1010L820 1080M1010 1000L1120 920M1390 1400L1360 1440L1330 1460L1300 1568M1020 820L1020 700L1000 650M1250 900L1230 960L1250 1080"/>
                <path class="thin" d="M1070 0L1060 60L1010 110L1020 180L1080 210"/>
              </g>
              <g class="creek">
                <path d="M388 14l8 100M190 208l-6 60M222 270l8 60-6 40 6 60M180 330l-14 40-16 50M70 330l14 30-8 40M320 370l10 30-6 50 6 80M432 300l6 40-4 40 12 34M270 395l6 40-4 50M582 190l-8 50-8 66M625 180l-6 50M570 430l16 90 10 90M230 530l-14 30"/>
              </g>
              <!-- boundaries -->
              <g class="bound" transform="translate(518 0) scale(.3346 .3903)">
                <path class="wide" d="M440 0L465 130L455 220L470 320L480 440L460 560L485 610L480 700L440 740L400 800L350 840L330 880L300 930L290 1030L100 1050L40 1010M540 575H730L735 600L710 620V690L760 690L780 725L880 720L870 860M870 870L940 900V990L860 1030L820 1060L770 1110L770 1230L810 1180L860 1190L920 1200L930 1280L900 1360L890 1450L780 1470L740 1568"/>
                <path class="wide zig" d="M70 1080L75 1180L90 1270L150 1310L150 1568M480 1280L490 1360L430 1320L400 1400L430 1450L340 1530L380 1568"/>
              </g>
              <g class="bound" transform="scale(.3333 .3903)">
                <path class="wide" d="M500 0L430 90L340 130L160 145M160 280V500L175 570L400 640L410 720L370 860L520 860L560 930L570 1030L600 1060L580 1140L650 1170L660 1230L740 1300L750 1380L770 1400L760 1500L740 1568M750 1380L930 1385"/>
                <path class="zig" d="M1290 800L1300 850L1340 920L1320 970L1300 1030M1280 1120L1220 1170L1260 1220L1250 1290L1230 1350L1290 1380L1230 1450L1220 1520M690 690L680 800L670 880L690 970L690 1020M960 1060L990 1150L950 1250"/>
              </g>
              <!-- railways -->
              <g class="rail" transform="scale(.3333 .3903)">
                <path d="M0 575L200 550L370 522L500 495L600 492L720 515H890L912 505V360M912 530L980 610L975 720L920 748L880 800L790 940L700 1030L640 1090L450 1220L320 1280L100 1360L50 1405H0M1005 378L1100 350L1115 400L1150 415L1190 335M1050 378L1080 420L1085 500L1105 550L1120 660L1220 770L1290 860V1000L1210 1150L1180 1290L1150 1420L1130 1450L1125 1568M1150 415L1200 590L1280 690L1320 800L1562 802M930 740L1200 770M1260 810L1320 795M1330 290L1440 225"/>
              </g>
              <g class="rail" transform="translate(518 0) scale(.3346 .3903)">
                <path d="M-2 802L500 850L640 920L760 985L900 1030L1100 1080H1180L1554 1030M0 980L60 1040L130 1055L400 1045L490 1003L560 1005L700 1055L1000 1155L1260 1225L1400 1290L1554 1362"/>
              </g>
              <!-- secondary roads -->
              <g class="sec" transform="scale(.3333 .3903)">
                <path d="M0 660L110 700L130 720L175 725L170 850L270 860L400 890L550 935L790 942L930 890L1030 825M270 650L265 700L310 750H350M330 600L320 640L270 650M660 530L690 620L705 740L740 810L840 870L790 940M500 750L540 715L700 712M800 580V800H760L770 880L790 940M800 655L880 670L1000 665M890 610L980 570L1040 580M1000 380L1040 560M830 540L1040 535M1110 350L1180 600L1220 700L1290 780L1340 850L1360 960L1325 1055L1190 1045L1185 1000M1210 330L1250 500V590M1160 600L1280 585L1420 540M1240 740L1310 690L1562 692M1000 660L1020 780L1050 850L1150 872L1350 870L1562 895M1090 750L1120 840L1115 910L1080 925M930 745L960 735L1040 745M800 945L850 960L950 950L1130 955M890 810L885 1240M900 890L920 960L970 1010L955 1240M1075 960L1090 1080L1110 1110L1100 1180L1060 1250M1190 1045L1200 1110L1220 1140L1170 1290L1150 1420L1130 1450L1125 1568M1215 780L1220 870L1200 950M0 950L80 990L160 1040L180 1100L230 1140L320 1150L400 1160L500 1120L550 1150L560 1260L620 1320M0 1180L40 1240L50 1320M40 1200L90 1210L160 1330L200 1370M0 1290H70L120 1260M90 1360L150 1450L180 1560L380 1550M550 1430L510 1450L490 1550M320 1150L440 1190M980 630L1090 630L1140 640L1120 680L1090 700V750M1060 640L1050 790L1030 825M895 810L980 795"/>
              </g>
              <g class="sec" transform="translate(518 0) scale(.3346 .3903)">
                <path d="M180 250L240 225L380 220L500 175L630 195L600 400L600 550L655 575L650 725M630 260L700 255L750 235L900 215L980 220L1040 290M1250 10L1300 40L1440 85L1554 80M1250 10L1265 130L1220 115L1140 150L1110 190L1090 210L1105 260L1060 305L1030 340L1020 380L980 400L950 490L965 570L925 620L910 750L870 770L865 850L800 845L700 880L640 890L620 920M930 260L900 310L850 340L840 400L860 430L920 470L935 500M500 708L650 730L750 765L870 790M160 660V800L140 990M60 630L40 760L0 820M0 895L160 885L300 870L430 910L480 920L430 1000M480 920L530 880M390 660L370 760L340 800L270 800V830M60 1000L90 1200L180 1200L280 1220L330 1215M90 1200L160 1290L165 1350M590 1040L570 1100L480 1190L435 1260L360 1240M630 1040V1110L580 1190L560 1330L580 1370L540 1450L530 1568M640 1020L830 1080L1050 1150L1400 1200L1450 1265H1554M700 960L760 1000L820 1010L790 1080M640 980L680 960M1554 1400L1490 1440L1510 1480L1490 1568M640 890L690 870L660 930"/>
              </g>
              <!-- primary roads -->
              <g class="pri" transform="scale(.3333 .3903)">
                <path d="M0 520L100 523L240 495L390 465L650 490L690 490L710 515L830 540M855 310L865 460M855 310L930 307L940 322L990 315L1040 340M1335 290L1420 230L1520 220M1420 540L1500 570L1560 608M790 940L785 1080L800 1100L780 1220L750 1230L690 1235L680 1270L620 1330L600 1358H565L550 1430L575 1520L580 1568M1400 1000L1345 1070L1350 1150L1375 1180L1380 1270L1320 1350L1330 1440L1360 1530L1350 1568M900 760L860 830L840 880L800 940M1220 1310L1280 1305L1330 1325"/>
              </g>
              <g class="pri" transform="translate(518 0) scale(.3346 .3903)">
                <path d="M-2 606L60 625M380 655L480 680L520 770L490 840L590 910L615 950L610 1030L600 1045L660 1078L720 1040L800 1000L870 1020L920 1055L1200 1110L1310 1145L1554 1100M480 690L505 685"/>
              </g>
              <!-- toll roads -->
              <g class="toll" transform="scale(.3333 .3903)">
                <path d="M190 0L200 10M210 10L270 22L310 5L330 0L380 60L378 150L395 165V185L470 250L540 290L640 295L735 288L800 340L850 348L1000 335L1040 345L1200 322L1310 290L1440 310L1520 345V205H1562M200 215L330 145L370 155L395 180M160 240V330L130 370L30 390L0 420M455 250L445 400L430 470L440 600L470 700L540 800L630 920L640 980L670 1020L700 1110L705 1170L770 1230L820 1250L1040 1248L1160 1300L1320 1322L1370 1340L1460 1330L1562 1345M0 832L240 780L380 685L440 675L560 685L720 668L800 645H850L880 610L835 570L830 545L865 465L810 350M880 610L885 700L920 760L1000 840L1040 905L1130 955L1210 970H1320L1400 990L1420 955L1520 950L1562 975M1510 345L1500 410L1420 540L1400 650L1390 830L1395 930L1415 960L1410 1000M1410 1000L1480 995L1520 975L1562 1005M0 800L50 830L85 880L30 1000L130 1110L230 1280L330 1360L380 1375M70 1105H180M665 1015L640 1080L590 1090L580 1130L540 1160L420 1230L300 1285L90 1360L40 1325L0 1320M940 1240L930 1400L905 1480V1530L850 1568M460 1420L490 1460L530 1480L575 1520M540 1505L580 1485M1510 465L1562 490M1400 1000L1380 1050V1130L1400 1190L1450 1310L1470 1350L1480 1470L1500 1568"/>
              </g>
              <g class="toll" transform="translate(518 0) scale(.3346 .3903)">
                <path d="M-2 210L60 214L155 208L185 300L240 370L270 320L300 315L340 290L480 265L610 232L700 222L900 238C1010 255 1060 300 1085 390L1135 640L1190 750L1235 870L1300 910L1320 950L1300 1090L1200 1230L1150 1310L1110 1370L1060 1388L980 1390L930 1440L830 1568M600 195L612 235M1100 670L1105 655L1135 640M240 370L270 410L290 580V660L300 730L350 800L355 870L345 930L385 1020L397 1150L395 1240L370 1275L230 1340L150 1357H20L-2 1345M-2 485L120 545L125 610M175 635L250 632L400 660L470 680M250 640L290 665M340 860L355 875M-2 975L80 1000L240 1007L480 1003L640 990M550 1015L610 1010M545 1008L700 1060L1000 1158L1260 1228L1400 1295L1554 1368M1475 1310V1285L1520 1275L1524 1250M1280 1095L1300 1140M990 1165L1020 1170"/>
              </g>
              <path class="ferry" d="M228 6l12 26 6 20 6 12M248 4l-2 40M256 6l-10 24M244 74l10-14M478 4l-2 16 8 40"/>
              <path class="seam" d="M0 154h82M850 154h186M0 537h1036"/>
              <!-- place names -->
              <g class="lb-district">
                <text x="63" y="46">nten</text><text x="125" y="208">Jakarta Barat</text><text x="451" y="151">Jakarta Utara</text><text x="250" y="477">Jakarta Selatan</text><text x="426" y="430">Jakarta Timur</text><text x="629" y="478">Bekasi</text><text x="108" y="491" text-anchor="middle">Tangerang</text><text x="108" y="513" text-anchor="middle">Selatan</text>
                <text transform="translate(683 74) rotate(87)" class="sm">Kab Bekasi</text><text transform="translate(677 -12) rotate(87)" class="sm">wa Barat</text><text transform="translate(645 -12) rotate(87)" class="sm">arta</text>
              </g>
              <g class="lb-city">
                <text x="324" y="240">Jakarta</text><text x="695" y="369">Bekasi</text><text x="103" y="548" text-anchor="middle">Tangerang</text><text x="103" y="577" text-anchor="middle">Selatan</text><text x="-8" y="242">g</text>
              </g>
              <g class="lb-town">
                <text x="132" y="606">Pamulang</text><text x="14" y="613">Setu</text><text x="798" y="212">Babelan</text><text x="831" y="421">Tambun</text><text x="1025" y="421">Cikarang</text><text x="814" y="592">Setu</text>
              </g>
              <g class="lb-air"><text x="519" y="450">Bandar</text><text x="519" y="467">Udara</text><text x="519" y="485">Halim Perdanakusuma</text></g>
              <path id="hsr" d="M803 449C860 480 940 480 1040 556" fill="none"/>
              <g class="lb-rail"><text><textPath href="#hsr">Jalur Kereta Cepat Jakarta-Bandung</textPath></text><text x="986" y="469">Kota Jababeka</text></g>
              <path fill="#7c62c0" d="M219 577h4l1 7 9 6v3l-9-3-1 5 3 3v2l-5-1-5 1v-2l3-3-1-5-9 3v-3l9-6z"/>
              <!-- route shields -->
              <g class="shield">
                <rect x="141" y="101" width="23" height="26" rx="3"/><rect x="336" y="342" width="23" height="26" rx="3"/><rect x="448" y="324" width="32" height="26" rx="3"/><rect x="477" y="516" width="23" height="26" rx="3"/><rect x="291" y="546" width="32" height="26" rx="3"/><rect x="545" y="231" width="32" height="26" rx="3"/>
                <text x="152" y="119">5</text><text x="347" y="360">7</text><text x="464" y="343">19</text><text x="488" y="534">2</text><text x="307" y="564">12</text><text x="561" y="250">21</text>
              </g>
              <g class="pin"><circle class="halo" cx="479" cy="421" r="22"/><circle cx="478" cy="420" r="12"/><circle class="halo" cx="558" cy="188" r="22"/><circle cx="556" cy="187" r="12"/></g>
            </svg>
            <div class="zoom"><button type="button" aria-label="Perbesar">+</button><button type="button" aria-label="Perkecil">−</button></div>
            <p class="credit"><svg width="18" height="12" viewBox="0 0 18 12"><path fill="#4c7be1" d="M0 0h18v6H0z"/><path fill="#ffd500" d="M0 6h18v6H0z"/></svg> <a href="#">Leaflet</a> | © OpenStreetMap contributors</p>
          </div>
        </section>
      </div>

      <section class="panel roster">
        <header class="roster-head">
          <div>
            <h2><svg class="ic"><use href="#i-groups"/></svg>Roster Kehadiran &amp; Status Lapangan Staff</h2>
            <p class="subtitle">Pantauan status kehadiran personil di seluruh outlet, akurasi GPS geofence, dan eksekusi tugas berjalan</p>
          </div>
          <button class="btn btn-soft" type="button"><svg class="ic"><use href="#i-sync"/></svg>Sinkronkan Roster</button>
        </header>
        <form class="filters">
          <label class="search"><svg class="ic"><use href="#i-search"/></svg><input type="text" aria-label="Cari staff" placeholder="Cari nama staff, peran, atau lokasi.."></label>
          <span class="select-wrap filter"><select aria-label="Outlet"><option>Semua Outlet</option></select><svg class="ic"><use href="#i-chevron"/></svg></span>
          <span class="select-wrap filter"><select aria-label="Status presensi"><option>Semua Status Presensi</option></select><svg class="ic"><use href="#i-chevron"/></svg></span>
        </form>
        <div class="table-wrap">
          <table>
            <thead><tr><th>PERSONIL STAFF &amp; PERAN</th><th>LOKASI PENUGASAN</th><th>JADWAL SHIFT</th><th>WAKTU CHECK-IN &amp; GPS</th><th>STATUS HADIR</th><th>FOTO PRESENSI</th><th>TUGAS BERJALAN &amp; SKOR AUDIT</th><th>AKSI CEPAT</th></tr></thead>
          </table>
        </div>
      </section>
    </main>
  </div>
</div>
</body>
</html>
```
FILE: styles.css
```css
:root {
  --ink: #0f172a;
  --text: #334155;
  --nav: #475569;
  --muted: #64748b;
  --faint: #94a3b8;
  --line: #e2e8f0;
  --line-strong: #cbd5e1;
  --bg: #f8fafc;
  --blue: #296290;
  --blue-soft: #e3f1fd;
  --green: #49a050;
  --green-dark: #2f7a3c;
  --green-soft: #e2fae7;
  --amber: #cb7a2c;
  --amber-soft: #fcf3cb;
  --orange: #db5f2b;
  --red: #c93731;
  --red-soft: #fae2e2;
  --indigo: #4f46e5;
}

* { box-sizing: border-box; }
h1, h2, h3, p, ul { margin: 0; padding: 0; }
ul { list-style: none; }
a { color: inherit; text-decoration: none; }
button, input, select { font: inherit; color: inherit; border: 0; background: none; padding: 0; margin: 0; }
button { cursor: pointer; white-space: nowrap; }
select { appearance: none; outline: none; }

body {
  margin: 0;
  font-family: Inter, "Liberation Sans", sans-serif;
  font-size: 19px;
  color: var(--ink);
  background: var(--bg);
}

.sprite { display: none; }
.ic { width: 24px; height: 24px; flex: none; fill: currentColor; color: inherit; }
.app { display: flex; height: 100vh; overflow: hidden; }

/* Sidebar */
.sidebar { flex: none; width: 414px; background: #fff; border-right: 1px solid var(--line); }
.brand { display: block; height: 92px; border-bottom: 1px solid #f1f5f9; }
.brand svg { display: block; }
.logo-text { font: 700 57px Lato, sans-serif; fill: #20472a; }
.nav { display: flex; flex-direction: column; gap: 5px; padding: 19px 21px 19px 15px; }
.nav-item {
  display: flex; align-items: center; gap: 18px;
  height: 60px; padding: 0 24px; border-radius: 18px;
  font-size: 21px; font-weight: 500; color: var(--nav);
}
.nav-item .ic { width: 30px; height: 30px; }
.nav-item.is-active { border-radius: 30px; background: var(--blue-soft); color: var(--blue); font-weight: 700; }
.nav-item.is-wizard { background: #f5f3ff; color: var(--indigo); font-weight: 700; }
.nav-item.is-upgrade { color: var(--green); font-weight: 700; }
.nav-item .ic-star { color: #eba13a; }
.nav-label {
  padding: 21px 18px 4px; line-height: 20px;
  font-size: 16px; font-weight: 700; letter-spacing: .09em; color: var(--faint);
}

/* Top bar */
.main { flex: 1; min-width: 0; display: flex; flex-direction: column; }
.topbar {
  flex: none; display: flex; align-items: center; height: 92px;
  padding: 0 32px 6px 47px; background: #fff; border-bottom: 1px solid var(--line);
}
.menu-btn { display: flex; color: var(--nav); }
.menu-btn .ic { width: 32px; height: 32px; }
.topbar-title { margin-left: 29px; font-size: 27px; font-weight: 700; }
.topbar-actions { display: flex; align-items: center; gap: 18px; margin-left: auto; }
.wizard-btn {
  display: flex; align-items: center; gap: 8px; height: 42px; padding: 0 22px; border-radius: 21px;
  background: linear-gradient(135deg, #4f46e5, #7c3aed); color: #fff;
  font-size: 17px; font-weight: 700; box-shadow: 0 4px 12px rgba(79, 70, 229, .3);
}
.plan-chip {
  display: flex; align-items: center; gap: 8px; height: 42px; padding: 0 19px; border-radius: 21px;
  border: 1px solid #bbf0ca; background: #f2fdf5; color: #256334; font-size: 18px; font-weight: 700;
}
.plan-chip .ic { color: var(--green-dark); }
.profile {
  display: flex; align-items: center; gap: 15px; height: 66px; padding: 0 20px 0 9px;
  border: 1px solid var(--line); border-radius: 33px; background: var(--bg); text-align: left;
}
.avatar {
  display: grid; place-items: center; width: 51px; height: 51px; border-radius: 50%;
  background: var(--blue); color: #fff; font-size: 20px; font-weight: 700;
}
.profile-text { display: flex; flex-direction: column; }
.profile-name { font-size: 19px; font-weight: 700; line-height: 23px; }
.profile-role { display: flex; align-items: center; gap: 5px; font-size: 16px; line-height: 20px; color: var(--muted); }
.profile-role .ic { width: 20px; height: 20px; }
.profile-arrow { margin-left: 5px; color: var(--muted); }

/* Page head */
.content { padding: 35px 44px 48px 48px; }
.page-head { display: flex; align-items: center; justify-content: space-between; margin-bottom: 28px; }
.title-row { display: flex; align-items: center; gap: 16px; }
h1 { font-size: 30px; line-height: 40px; font-weight: 700; letter-spacing: -.02em; }
.live-badge {
  display: flex; align-items: center; gap: 10px; height: 33px; padding: 0 16px; border-radius: 17px;
  background: var(--green-soft); color: var(--green-dark); font-size: 16px; font-weight: 700;
}
.dot { width: 12px; height: 12px; border-radius: 50%; background: currentColor; }
.dot.green { color: var(--green); }
.dot.amber { color: var(--amber); }
.dot.red { color: var(--red); }
.subtitle { margin-top: 3px; line-height: 28px; color: var(--muted); }
.head-actions { display: flex; gap: 15px; }
.interval {
  display: flex; align-items: center; height: 54px; width: 323px; padding: 0 24px 0 19px;
  border: 1px solid var(--line-strong); border-radius: 16px; background: #fff; font-size: 18px;
}
.interval > .ic { margin-right: 11px; color: var(--blue); }
.interval label { margin-right: 16px; font-weight: 500; color: var(--nav); }
.interval .select-wrap { flex: 1; }
.interval select { font-weight: 700; }
.select-wrap { display: grid; align-items: center; }
.select-wrap > * { grid-area: 1 / 1; }
.select-wrap .ic { width: 20px; height: 20px; justify-self: end; pointer-events: none; }
.btn {
  display: flex; align-items: center; gap: 9px; height: 54px; padding: 0 21px; border-radius: 16px;
  font-size: 19px; font-weight: 700; color: var(--blue);
}
.btn .ic { width: 28px; height: 28px; }
.btn-soft { background: var(--blue-soft); }
.btn-line { border: 1px solid var(--line-strong); }

/* KPI cards */
.kpis { display: grid; grid-template-columns: repeat(4, 1fr); gap: 24px; margin-bottom: 30px; }
.kpi {
  display: flex; align-items: center; justify-content: space-between; padding: 24px 30px;
  border: 1px solid var(--line); border-radius: 24px; background: #fff; box-shadow: 0 2px 4px rgba(15, 23, 42, .04);
}
.kpi h3 { font-size: 16px; line-height: 20px; font-weight: 700; letter-spacing: .06em; color: var(--muted); }
.kpi-value { margin-top: 4px; font-size: 38px; line-height: 46px; font-weight: 700; letter-spacing: -.02em; }
.kpi-note { display: flex; align-items: center; gap: 8px; margin-top: 8px; font-size: 18px; line-height: 24px; font-weight: 600; }
.kpi-note .ic { width: 22px; height: 22px; }
.kpi .green { color: var(--green); }
.kpi .orange { color: var(--orange); }
.kpi .blue { color: var(--blue); }
.kpi .red { color: var(--red); }
.kpi-icon { display: grid; place-items: center; width: 66px; height: 66px; border-radius: 18px; }
.kpi-icon .ic { width: 36px; height: 36px; }
.bg-green { background: var(--green-soft); color: var(--green-dark); }
.bg-amber { background: var(--amber-soft); color: var(--amber); }
.bg-blue { background: var(--blue-soft); color: var(--blue); }
.bg-red { background: var(--red-soft); color: var(--red); }

/* Panels */
.panels { display: grid; grid-template-columns: 1fr 1fr; gap: 30px; margin-bottom: 30px; }
.panel {
  display: flex; flex-direction: column; min-width: 0; padding: 27px 30px;
  border-radius: 24px; background: #fff; box-shadow: 0 4px 20px rgba(15, 23, 42, .05);
}
.panel-head {
  display: flex; align-items: center; justify-content: space-between; height: 44px;
  padding-bottom: 13px; border-bottom: 1px solid #f1f5f9; margin-bottom: 18px;
}
.panel h2 { display: flex; align-items: center; gap: 12px; font-size: 22px; font-weight: 700; }
.panel h2 .ic { width: 30px; height: 30px; color: var(--blue); }
.count-chip {
  padding: 0 11px; border-radius: 15px; background: #f1f5f9; color: var(--nav);
  font-size: 17px; line-height: 29px; font-weight: 600;
}
.tabs { display: flex; gap: 7px; padding: 5px; border-radius: 16px; background: #f1f5f9; margin-bottom: 18px; }
.tab { height: 44px; padding: 0 18px; border-radius: 12px; font-size: 17px; font-weight: 700; color: var(--nav); }
.tab.is-active { background: var(--blue); color: #fff; box-shadow: 0 2px 6px rgba(41, 98, 144, .3); }
.feed { display: flex; flex-direction: column; gap: 12px; padding: 0 7px 11px 0; }
.feed-card {
  display: flex; gap: 18px; padding: 15px 18px; border: 1px solid var(--line); border-radius: 20px;
  background: #fff; box-shadow: 0 1px 4px rgba(15, 23, 42, .04);
}
.feed-icon { flex: none; display: grid; place-items: center; width: 54px; height: 54px; border-radius: 16px; }
.feed-icon .ic { width: 30px; height: 30px; }
.feed-body { flex: 1; min-width: 0; }
.feed-row { display: flex; align-items: center; justify-content: space-between; }
.who { font-size: 18px; line-height: 25px; color: var(--muted); }
.who strong { font-size: 19px; font-weight: 700; color: var(--ink); }
time {
  padding: 0 9px; border-radius: 8px; background: #f1f5f9; color: var(--muted);
  font: 700 16px/25px "DejaVu Sans Mono", monospace;
}
.feed-text { margin: 4px 0 8px; line-height: 26px; color: var(--text); }
.outlet { display: flex; align-items: center; gap: 8px; font-size: 18px; font-weight: 600; color: var(--muted); }
.outlet .ic { width: 20px; height: 20px; color: var(--blue); }
.score {
  display: flex; align-items: center; gap: 7px; height: 28px; padding: 0 11px; border-radius: 14px;
  background: var(--green-soft); color: var(--green-dark); font-size: 16px; font-weight: 700;
}
.score .ic { width: 18px; height: 18px; }
.legend { display: flex; gap: 18px; font-size: 18px; font-weight: 600; }
.legend li { display: flex; align-items: center; gap: 6px; }

/* Map */
.map { position: relative; flex: 1; border: 1px solid var(--line); border-radius: 20px; overflow: hidden; }
.map-art { position: absolute; inset: 0; width: 100%; height: 100%; font-family: "Noto Sans", sans-serif; }
.map-art path { vector-effect: non-scaling-stroke; stroke-linejoin: round; stroke-linecap: round; }
.st { fill: none; stroke: #a3a3ae; stroke-width: 1; opacity: .6; }
.ds { fill: none; stroke: #8a7098; stroke-width: 1; stroke-dasharray: 8 3 2 3; opacity: .7; }
.sea { fill: #b1d1dc; stroke: #9085ab; stroke-width: 3; stroke-dasharray: 10 4; }
.river, .creek { fill: none; stroke: #a9d2e0; stroke-width: 2; }
.river .thin { stroke: #b4c4ce; }
.creek { stroke: #a3c3d8; }
.bound { fill: none; stroke: #9c87a6; }
.bound .wide { stroke-width: 3; opacity: .8; }
.bound .zig { stroke: #8f92b8; stroke-width: 3; stroke-dasharray: 7 4; }
.rail { fill: none; stroke: #808080; stroke-width: 2; }
.sec { fill: none; stroke: #efc27f; stroke-width: 2; }
.pri { fill: none; stroke: #e8926c; stroke-width: 3; }
.toll { fill: none; stroke: #da6b86; stroke-width: 3; }
.ferry { fill: none; stroke: #6f7ef0; stroke-width: 2; stroke-dasharray: 8 5; }
.seam { fill: none; stroke: #fff; stroke-width: 1; opacity: .7; }
.map-art text { paint-order: stroke; stroke: rgba(255, 255, 255, .6); stroke-width: 2px; }
.lb-district { font-size: 18px; fill: #97749f; }
.lb-district .sm { font-size: 15px; }
.lb-city { font-size: 22px; fill: #333; }
.lb-town { font-size: 17px; fill: #444; }
.lb-air { font-size: 15px; font-style: italic; fill: #5a48ac; text-anchor: middle; }
.lb-rail { font-size: 15px; fill: #666; }
.shield { font-size: 15px; font-weight: 600; fill: #e6c6cd; stroke: #d995a5; text-anchor: middle; }
.map-art .shield text { fill: #6d2b40; stroke: none; }
.pin circle { fill: #49a050; stroke: rgba(255, 255, 255, .7); stroke-width: 2px; }
.pin .halo { stroke: none; fill-opacity: .55; }
.zoom {
  position: absolute; top: 15px; left: 16px; border: 3px solid rgba(0, 0, 0, .25); border-radius: 7px;
  background: #fff; background-clip: padding-box; overflow: hidden;
}
.zoom button {
  display: block; width: 46px; height: 45px; padding-top: 4px;
  font: 700 35px/41px "Liberation Sans", sans-serif; color: #000;
}
.zoom button + button { border-top: 1px solid #ccc; }
.credit {
  position: absolute; right: 0; bottom: 0; padding: 0 8px; background: rgba(255, 255, 255, .8);
  font: 18px/26px "Liberation Sans", sans-serif; color: #333;
}
.credit a { color: #0078a8; }

/* Roster */
.roster { padding-top: 30px; }
.roster-head { display: flex; align-items: center; justify-content: space-between; margin-bottom: 21px; }
.roster-head h2 { font-size: 24px; line-height: 34px; }
.roster-head h2 .ic { width: 33px; height: 33px; }
.filters {
  display: flex; gap: 15px; padding: 15px 21px; border: 1px solid var(--line); border-radius: 18px;
  margin-bottom: 24px; font-family: "Liberation Sans", sans-serif;
  box-shadow: 0 1px 4px rgba(15, 23, 42, .03);
}
.search, .filter { height: 57px; border: 1px solid var(--line-strong); border-radius: 15px; background: var(--bg); }
.search { display: flex; align-items: center; gap: 14px; width: 390px; padding: 0 20px 0 18px; color: var(--muted); }
.search .ic { width: 27px; height: 27px; }
.search input { flex: 1; min-width: 0; outline: none; }
.search input::placeholder { color: var(--faint); opacity: 1; }
.filter { width: 281px; color: var(--text); }
.filter select { height: 55px; padding: 0 40px 0 24px; }
.filter .ic { margin-right: 6px; }
.table-wrap { border: 1px solid var(--line); border-radius: 18px; background: var(--bg); overflow: hidden; }
table { width: 100%; table-layout: fixed; border-collapse: collapse; }
th {
  padding: 18px 24px; text-align: left; white-space: nowrap;
  font-size: 16px; line-height: 20px; font-weight: 700; letter-spacing: .09em; color: var(--muted);
}
th:nth-child(1) { width: 14.3%; }
th:nth-child(2) { width: 11.5%; }
th:nth-child(3) { width: 9.9%; }
th:nth-child(4) { width: 13.2%; }
th:nth-child(5) { width: 9.6%; }
th:nth-child(6) { width: 9.1%; }
th:last-child { text-align: right; }
```
